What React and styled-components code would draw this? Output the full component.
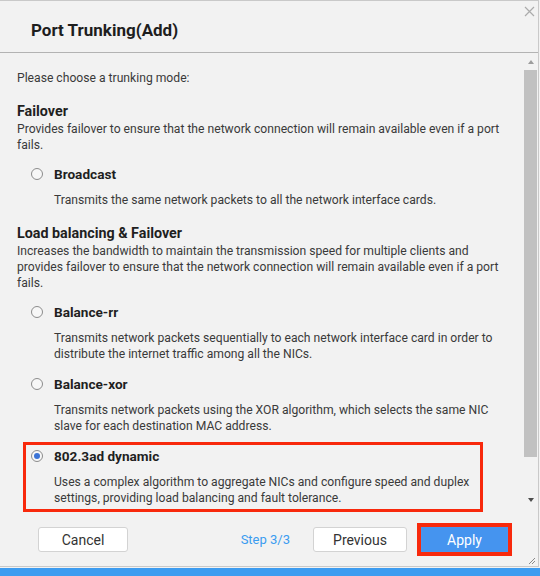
import React from "react";
import styled, { createGlobalStyle } from "styled-components";

const Global = createGlobalStyle`
  html, body { margin: 0; padding: 0; background: #f2f2f2; }
  body { font-family: Roboto, "Liberation Sans", Arial, sans-serif; }
  *, *::before, *::after { box-sizing: border-box; }
`;

const Page = styled.div`
  width: 540px;
  height: 576px;
  display: flex;
  flex-direction: column;
  overflow: hidden;
`;

const Dialog = styled.div`
  position: relative;
  width: 539px;
  height: 567px;
  background: #f2f2f2;
  border-top: 1px solid #c9c9c9;
  border-right: 1px solid #c9c9c9;
  border-bottom: 1px solid #c9c9c9;
  display: flex;
  flex-direction: column;
`;

const Header = styled.div`
  height: 52px;
  flex: none;
  display: flex;
  align-items: flex-start;
  padding: 0 3px 0 31px;
  border-bottom: 1px solid #b3b3b3;
`;

const Title = styled.h1`
  flex: 1;
  margin: 19px 0 0;
  font-size: 17px;
  line-height: 20px;
  font-weight: 700;
  color: #1e1e1e;
`;

const Close = styled.button`
  margin-top: 5px;
  width: 11px;
  height: 11px;
  padding: 0;
  border: 0;
  background: none;
  display: flex;
`;

const Body = styled.div`
  flex: 1;
  display: flex;
  min-height: 0;
`;

const Content = styled.div`
  flex: 1;
  padding: 17px 19px 0 17px;
  overflow: hidden;
  color: #333;
`;

const Text = styled.p`
  margin: ${(p) => p.$mt || 0}px 0 0;
  font-size: 12.15px;
  line-height: 16px;
  color: #3a3a3a;
`;

const Heading = styled.h2`
  margin: ${(p) => p.$mt}px 0 0;
  font-size: 14.3px;
  line-height: 19px;
  font-weight: 700;
  color: #1f1f1f;
`;

const Option = styled.div`
  position: relative;
  margin: ${(p) => p.$mt}px 0 0 9px;
  padding: 2px 0 3px 5px;
  ${(p) =>
    p.$highlight &&
    `
    &::after {
      content: "";
      position: absolute;
      left: -3px;
      top: -3px;
      bottom: -3px;
      width: 460px;
      border: 3px solid #f8290c;
      pointer-events: none;
    }
  `}
`;

const OptionRow = styled.label`
  display: flex;
  align-items: center;
  gap: 11px;
  height: 18px;
`;

const Radio = styled.span`
  width: 12px;
  height: 12px;
  border-radius: 50%;
  border: 1px solid #8c8c8c;
  background: #f7f7f7;
  display: flex;
  align-items: center;
  justify-content: center;
  flex: none;
  &::after {
    content: "";
    width: 6px;
    height: 6px;
    border-radius: 50%;
    background: ${(p) => (p.$checked ? "#3b73d6" : "transparent")};
  }
`;

const OptionName = styled.span`
  font-size: 13.6px;
  font-weight: 700;
  color: #1f1f1f;
`;

const OptionDesc = styled(Text)`
  margin: 9px 0 0 23px;
`;

const ScrollBar = styled.div`
  width: 14px;
  flex: none;
  display: flex;
  flex-direction: column;
  padding-bottom: 5px;
`;

const ArrowBox = styled.div`
  height: 17px;
  display: flex;
  align-items: center;
  justify-content: center;
  padding-right: 1px;
  &::before {
    content: "";
    border-left: 3.5px solid transparent;
    border-right: 3.5px solid transparent;
    ${(p) =>
      p.$dir === "up"
        ? "border-bottom: 4px solid #9d9d9d;"
        : "border-top: 4px solid #4d4d4d;"}
  }
`;

const Thumb = styled.div`
  width: 13px;
  height: 387px;
  background: #c1c1c1;
`;

const Track = styled.div`
  flex: 1;
`;

const Footer = styled.div`
  height: 53px;
  flex: none;
  display: flex;
  align-items: center;
  padding: 0 30px 0 38px;
`;

const Button = styled.button`
  width: ${(p) => p.$w}px;
  height: 25px;
  border-radius: 3px;
  font-family: Roboto, "Liberation Sans", Arial, sans-serif;
  font-size: 14px;
  padding: 0;
  border: 1px solid ${(p) => (p.$primary ? "#4a95ee" : "#d3d3d3")};
  background: ${(p) => (p.$primary ? "#4594ef" : "#ffffff")};
  color: ${(p) => (p.$primary ? "#ffffff" : "#333333")};
  margin-left: ${(p) => p.$ml || 0}px;
  ${(p) => p.$marked && "outline: 4px solid #f8290c; outline-offset: 0; border-radius: 0;"}
`;

const Spacer = styled.div`
  flex: 1;
`;

const Step = styled.span`
  font-size: 13px;
  color: #3b9cf0;
`;

const Grip = styled.svg`
  position: absolute;
  right: 2px;
  bottom: 1px;
`;

const BlueBar = styled.div`
  margin-top: 1px;
  height: 8px;
  background: #3d9cf0;
`;

const options1 = [
  {
    name: "Broadcast",
    desc: "Transmits the same network packets to all the network interface cards.",
  },
];

const options2 = [
  {
    name: "Balance-rr",
    desc: "Transmits network packets sequentially to each network interface card in order to distribute the internet traffic among all the NICs.",
  },
  {
    name: "Balance-xor",
    desc: "Transmits network packets using the XOR algorithm, which selects the same NIC slave for each destination MAC address.",
  },
  {
    name: "802.3ad dynamic",
    desc: "Uses a complex algorithm to aggregate NICs and configure speed and duplex settings, providing load balancing and fault tolerance.",
    checked: true,
  },
];

function ModeOption({ o, mt }) {
  return (
    <Option $mt={mt} $highlight={o.checked}>
      <OptionRow>
        <Radio $checked={o.checked} />
        <OptionName>{o.name}</OptionName>
      </OptionRow>
      <OptionDesc>{o.desc}</OptionDesc>
    </Option>
  );
}

export default function App() {
  return (
    <>
      <Global />
      <Page>
        <Dialog>
          <Header>
            <Title>Port Trunking(Add)</Title>
            <Close aria-label="close">
              <svg width="11" height="11" viewBox="0 0 11 11">
                <path d="M1 1L10 10M10 1L1 10" stroke="#ababab" strokeWidth="1.2" />
              </svg>
            </Close>
          </Header>
          <Body>
            <Content>
              <Text>Please choose a trunking mode:</Text>
              <Heading $mt={16}>Failover</Heading>
              <Text>
                Provides failover to ensure that the network connection will remain available even if a port fails.
              </Text>
              {options1.map((o) => (
                <ModeOption key={o.name} o={o} mt={10} />
              ))}
              <Heading $mt={13}>Load balancing &amp; Failover</Heading>
              <Text>
                Increases the bandwidth to maintain the transmission speed for multiple clients and provides failover to ensure that the network connection will remain available even if a port fails.
              </Text>
              {options2.map((o, i) => (
                <ModeOption key={o.name} o={o} mt={i === 0 ? 10 : 8} />
              ))}
            </Content>
            <ScrollBar>
              <ArrowBox $dir="up" />
              <Thumb />
              <Track />
              <ArrowBox $dir="down" />
            </ScrollBar>
          </Body>
          <Footer>
            <Button $w={90}>Cancel</Button>
            <Spacer />
            <Step>Step 3/3</Step>
            <Button $w={94} $ml={23}>Previous</Button>
            <Button $w={87} $ml={14} $primary $marked>Apply</Button>
          </Footer>
          <Grip width="8" height="8" viewBox="0 0 8 8">
            <path d="M7 1L1 7M7 4L4 7" stroke="#8a8a8a" strokeWidth="1" />
          </Grip>
        </Dialog>
        <BlueBar />
      </Page>
    </>
  );
}
